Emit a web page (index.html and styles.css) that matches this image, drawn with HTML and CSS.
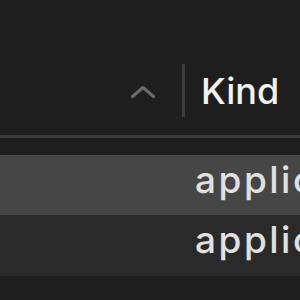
FILE: index.html
```html
<!DOCTYPE html>
<html>
<head>
<meta charset="utf-8">
<link rel="stylesheet" href="styles.css">
</head>
<body>
<div class="table">
  <div class="header">
    <div class="header-row">
      <svg class="chevron" width="24" height="14" viewBox="0 0 24 14">
        <polyline points="1.5,12.5 12,3.5 22.5,12.5" fill="none" stroke="#6b6b6b" stroke-width="3" stroke-linecap="round" stroke-linejoin="round"/>
      </svg>
      <div class="separator"></div>
      <div class="col-title">Kind</div>
    </div>
  </div>
  <div class="rows">
    <div class="row selected"><span class="cell">application</span></div>
    <div class="row alt"><span class="cell">application</span></div>
  </div>
</div>
</body>
</html>
```
FILE: styles.css
```css
html, body {
  margin: 0;
  padding: 0;
  background: #1e1e1e;
  overflow: hidden;
}
body {
  width: 300px;
  height: 300px;
  font-family: Inter, "Liberation Sans", Arial, sans-serif;
}
.table {
  display: flex;
  flex-direction: column;
}
.header {
  padding-top: 64px;
  height: 71px;
  border-bottom: 3px solid #3b3b3b;
}
.header-row {
  display: flex;
  align-items: center;
  height: 53px;
  padding-left: 131px;
}
.chevron {
  display: block;
  flex: none;
}
.separator {
  width: 3px;
  height: 53px;
  background: #3d3d3d;
  margin-left: 27px;
  flex: none;
}
.col-title {
  margin-left: 16px;
  font-size: 36px;
  font-weight: 500;
  line-height: 52px;
  color: #f2f2f2;
  white-space: nowrap;
}
.rows {
  margin-top: 17px;
  display: flex;
  flex-direction: column;
}
.row {
  height: 53px;
  padding-bottom: 7px;
  padding-left: 195px;
  overflow: hidden;
  white-space: nowrap;
}
.row.selected {
  background: #464646;
}
.row.alt {
  background: #2a2a2a;
  height: 54px;
}
.cell {
  font-size: 37px;
  font-weight: 500;
  letter-spacing: 2.5px;
  line-height: 49px;
  color: #e0e0e0;
}
```
